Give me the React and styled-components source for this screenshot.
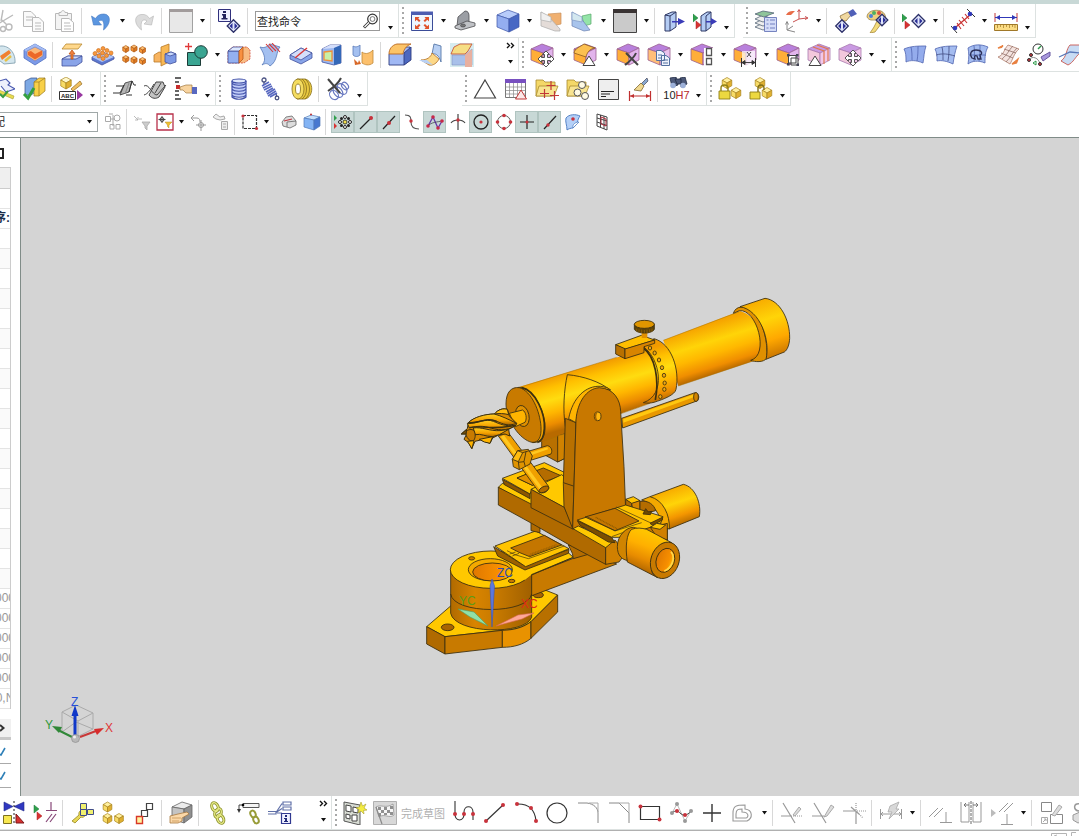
import React from 'react';
import styled, { createGlobalStyle, css } from 'styled-components';

const GlobalStyle = createGlobalStyle`
	* {
		box-sizing: border-box;
	}
	body {
		margin: 0;
		background: #fff;
		font-family: "Liberation Sans", "Noto Sans CJK SC", sans-serif;
		font-size: 11px;
		color: #222;
		overflow: hidden;
	}
	button, input, select {
		font: inherit;
		color: inherit;
	}
`;

/* ---------- shared icon pieces ---------- */

function Cube({ x, y, s, t = '#c3d4f8', l = '#8fa8e8', r = '#5f7fd0', k = '#41519c' }) {
	const w = s * 0.87;
	const h = s / 2;
	return (
		<g stroke={k} strokeWidth=".7" strokeLinejoin="round">
			<path fill={t} d={`M${x} ${y - s}L${x + w} ${y - h}L${x} ${y}L${x - w} ${y - h}Z`} />
			<path fill={l} d={`M${x - w} ${y - h}L${x} ${y}V${y + s}L${x - w} ${y + h}Z`} />
			<path fill={r} d={`M${x + w} ${y - h}L${x} ${y}V${y + s}L${x + w} ${y + h}Z`} />
		</g>
	);
}

// wide box seen from a shallow angle, the base of the face-editing icons
function FaceBox({ x = 12, t = '#b880dc', l = '#ffae38', r = '#e2b4ec', k = '#9a5f90', w = 11 }) {
	return (
		<g stroke={k} strokeWidth=".8" strokeLinejoin="round">
			<path fill={t} d={`M${x - w} 6L${x} 1L${x + w} 5L${x + 1} 10Z`} />
			<path fill={l} d={`M${x - w} 6L${x + 1} 10V22L${x - w} 17Z`} />
			<path fill={r} d={`M${x + w} 5L${x + 1} 10V22L${x + w} 17Z`} />
		</g>
	);
}

const gold = { t: '#fff0a0', l: '#f8dc68', r: '#e0b030', k: '#a88420' };
const orange = { t: '#ffc070', l: '#f89838', r: '#e07820', k: '#b05c18' };
const rose = { t: '#c99ae2', l: '#f2c8dc', r: '#f2c8ea', k: '#a878b0' };

function MoveCross({ x = 16, y = 16 }) {
	return (
		<path transform={`translate(${x} ${y})`} fill="#fff" stroke="#444" strokeWidth=".9"
			d="M0-8L3.500-4.500H1.500V-1.500H4.500V-3.500L8 0L4.500 3.500V1.500H1.500V4.500H3.500L0 8L-3.500 4.500H-1.500V1.500H-4.500V3.500L-8 0L-4.500-3.500V-1.500H-1.500V-4.500H-3.500Z" />
	);
}

function Diamond({ x, y, r = 6 }) {
	return (
		<g transform={`translate(${x} ${y})`}>
			<path d={`M0 ${-r}L${r} 0L0 ${r}L${-r} 0Z`} fill="#dfe4fa" stroke="#2b2f68" strokeWidth="1.300" />
			<path d="M-1-3V3L-4 0ZM1-3V3L4 0Z" fill="#2b2f98" />
		</g>
	);
}

function Flags({ x, y }) {
	return (
		<g transform={`translate(${x} ${y})`}>
			<path d="M0 0L5 4L0 8Z" fill="#2fa04c" stroke="#1c7a38" strokeWidth=".5" />
			<path d="M3 7L8 11L3 15Z" fill="#d83232" stroke="#a82020" strokeWidth=".5" />
		</g>
	);
}

function Dots({ at, c = '#c8323c', r = 2 }) {
	return at.map(([x, y]) => <circle key={`${x}_${y}`} cx={x} cy={y} r={r} fill={c} />);
}

const ICONS = {
	cut: <g fill="none" stroke="#bbb" strokeWidth="1.400"><path d="M13 1L11 12M23 6L8 15" /><circle cx="19" cy="18" r="3" /><path d="M12 11L17 16" /><circle cx="13" cy="20" r="2.500" /></g>,
	copy: <g fill="#fafafa" stroke="#b9b9b9"><path d="M2.500 2.500H10L14.500 7V17.500H2.500Z" /><path d="M5 8H12M5 11H12" /><path d="M11.500 8.500H18L22.500 13V22.500H11.500Z" /><path d="M14 14H20M14 17H20M14 20H20" /></g>,
	paste: <g fill="#f4f4f4" stroke="#b9b9b9"><path d="M3.500 4.500H19.500V20.500H3.500Z" /><path d="M7 6.500V3.500H9C9 1 13 1 13 3.500H15.500V6.500Z" /><path fill="#fff" d="M9.500 9.500H17L21.500 13.500V22.500H9.500Z" /><path d="M12 14H18M12 17H19M12 20H19" /></g>,
	undo: <path d="M2.500 7L4.500 16L12.500 16L9.500 12.500C13 9.500 16 12 14.500 21C22 15.500 22.500 5.500 15 5C10.500 4.800 8 7 6.500 9.500Z" fill="#5b96e0" stroke="#4678c0" strokeWidth=".6" />,
	redo: <path d="M21.500 7L19.500 16L12 15L15 12C11 9 8 12 9.500 21C2 15.500 1.500 6.500 9 5.500C13.500 4.900 16 7 17.500 9.500Z" fill="#dcdcdc" stroke="#bcbcbc" strokeWidth=".7" />,
	swatch: <g><path d="M.500.500H23.500V23.500H.500Z" fill="#e8e8e8" stroke="#a2a2a2" /><path d="M0 0H24V3H0Z" fill="#a29c9c" /></g>,
	swatchDark: <g><path d="M.500.500H23.500V23.500H.500Z" fill="#cacaca" stroke="#444" /><path d="M0 0H24V4H0Z" fill="#3a3434" /></g>,
	objectInfo: <g><path d="M.500.500H12.500V12.500H.500Z" fill="#eef0ff" stroke="#30307c" /><path d="M5 2H8V4H5ZM4 5H8V9H9.500V10.500H3.500V9H5V6.500H4Z" fill="#20205c" /><Diamond x={15.500} y={17} r={6.300} /></g>,
	fit: <g><path d="M1.500 3.500H22.500V21.500H1.500Z" fill="#eef6ff" stroke="#3b4c98" /><path d="M1 2.500H23V6H1Z" fill="#4c5cb0" /><path d="M5 8H9.500L8.300 9.500L10.500 11.700L9 13L6.700 10.800L5 12.500ZM19 8H14.500L15.700 9.500L13.500 11.700L15 13L17.300 10.800L19 12.500ZM5 20H9.500L8.300 18.500L10.500 16.300L9 15L6.700 17.200L5 15.500ZM19 20H14.500L15.700 18.500L13.500 16.300L15 15L17.300 17.200L19 15.500Z" fill="#e0522c" /></g>,
	bracket: <g stroke="#4e4e52" strokeWidth=".8"><path fill="#9b9ea4" d="M5 8L12 2C15 2 16 4 16 7V15L4 17Z" /><path fill="#c0c2c6" d="M2 17L14 12L22 14V17L8 21L2 19Z" /><ellipse cx="10" cy="16.500" rx="2.500" ry="1.500" fill="#777" /></g>,
	shaded: <g stroke="#3c54a8" strokeWidth=".7"><path d="M1 6L12 1L23 5L13 10Z" fill="#b8ccfa" /><path d="M1 6L13 10V23L1 18Z" fill="#94aef0" /><path d="M23 5L13 10V23L23 18Z" fill="#4868c4" /></g>,
	clipOrange: <g strokeWidth=".7"><path d="M9 5L22 4V15L13 17Z" fill="#f0b070" stroke="#c8905c" /><path d="M2 3L10 8L21 20V22L16 22L2 17Z" fill="#e4dcd8" stroke="#aaa" /><path d="M2 3L12 8V13L2 11Z" fill="#f0f0f0" stroke="#b0b0b0" /></g>,
	clipGreen: <g strokeWidth=".7"><path d="M12 7L21 5V15L14 17Z" fill="#94e4a8" stroke="#58a868" /><path d="M2 3L10 8L20 21L14 22L2 17Z" fill="#a8c4ec" stroke="#6880b0" /><path d="M2 3L12 8V13L2 11Z" fill="#d4e8f0" stroke="#8098c4" /></g>,
	exportSolid: <g><path d="M3 6L10 3H14V18L8 22H3Z" fill="#b4ccf4" stroke="#2f3864" /><path d="M8 7L14 3M8 7V22M3 6L8 7" fill="none" stroke="#2f3864" /><path d="M10 12H16V9L23 12.500L16 16V13.500H10Z" fill="#3a3cb8" /></g>,
	exportFlags: <g><path d="M8 7L14 3H18V18L13 22H8Z" fill="#b4ccf4" stroke="#2f3864" /><path d="M13 7L18 3M13 7V22" fill="none" stroke="#2f3864" /><path d="M13 12H18V9L24 12.500L18 16V13.500H13Z" fill="#3a3cb8" /><Flags x={0} y={5} /></g>,
	layers: <g stroke="#567" strokeWidth=".8"><path d="M1 18L9 14L18 18L9 21Z" fill="#eee" /><path d="M1 14L9 10L18 14L9 17Z" fill="#eee" /><path d="M1 10L9 6L18 10L9 13Z" fill="#eee" /><path d="M1 5L9 2L20 4L10 8Z" fill="#8fc49a" /><path d="M10.500 8.500H22.500V22.500H10.500Z" fill="#d4dcf8" stroke="#5868b0" /><path d="M12.500 11H14.500M16 11H21M12.500 15H14.500M16 15H21M12.500 19H14.500M16 19H21" stroke="#5868b0" /></g>,
	csys: <g fill="none"><path d="M14 1V10L22 9M14 10L8 13" stroke="#c85050" /><path d="M12.500 3L14 .500L15.500 3M20 7.500L23 9L20 10.500" stroke="#c85050" /><path d="M2 14V21L10 23M2 21L8 17" stroke="#888" /><path d="M1 6C3 2 6 2 10 2L6 6Z" fill="#e86c48" /><path d="M.500 15.500L2 12.500L3.500 15.500" stroke="#888" /></g>,
	handDiamond: <g><path d="M6 7L14 3L17 6L12 12L8 12Z" fill="#f0d8a0" stroke="#907440" strokeWidth=".8" /><path d="M14 3L19 0L23 5L17 8Z" fill="#5060b8" /><Diamond x={8} y={17} r={6.300} /></g>,
	palette: <g><path d="M2 8C2 2 10 0 16 2C22 5 22 12 17 14C13 15 14 11 11 11C8 11 4 12 2 8Z" fill="#f0d080" stroke="#98844c" strokeWidth=".8" /><Dots at={[[6, 7]]} c="#4c80d8" /><Dots at={[[9, 4]]} c="#50b060" /><Dots at={[[14, 4]]} c="#d85040" /><path d="M12 12L16 15L10 23L5 24L9 18Z" fill="#f4dc7c" stroke="#a88c3c" strokeWidth=".8" /><Diamond x={17} y={11} r={5.800} /></g>,
	flagsDiamond: <g><Flags x={0} y={5} /><Diamond x={16.500} y={12} r={6.500} /></g>,
	pointMeasure: <g><path d="M5 18L19 6" stroke="#c83030" strokeWidth="1.200" /><path d="M8 11L13 17M11 8L16 14M6 14L10 20M14 5L18 10" stroke="#c83030" strokeWidth="1.100" /><path d="M0 17L6 24M16 0L24 8" stroke="#333" /><Dots at={[[4, 19], [19, 5]]} c="#3038b8" r={2.300} /></g>,
	measure: <g><path d="M1 4V13M23 4V13" stroke="#c03838" /><path d="M1 8.500H23" stroke="#3038b8" /><path d="M1.500 8.500L6 6V11ZM22.500 8.500L18 6V11Z" fill="#3038b8" /><path d="M.500 15.500H23.500V21.500H.500Z" fill="#fbdc84" stroke="#a07828" /><path d="M3.500 16V19M6.500 16V18M9.500 16V19M12.500 16V18M15.500 16V19M18.500 16V18M21 16V19" stroke="#a07828" strokeWidth=".7" /></g>,

	dial: <g><path d="M5 4C14 0 24 8 23 20L12 21L3 14Z" fill="#d4e6ee" stroke="#7898a8" strokeWidth=".8" /><path d="M8 13L17 7L19 10L10 17Z" fill="#f08030" /><path d="M13 18L19 13" stroke="#e8c040" strokeWidth="2.500" /></g>,
	pocket: <g><path d="M1 7L12 1L23 7V15L12 22L1 15Z" fill="#7c9ae8" stroke="#5070c0" strokeWidth=".8" /><path d="M1 7L12 1L23 7L12 14Z" fill="#a4bcf4" /><path d="M4 8L12 4L20 8V13L12 18L4 13Z" fill="#fbb878" stroke="#6c80c8" strokeWidth=".7" /><path d="M5 9L8 8L12 11L19 7.500V12L12 16.500L5 12Z" fill="#ec6828" /></g>,
	extrude: <g strokeWidth=".8"><path d="M6 1H22L18 6H2Z" fill="#ffd88c" stroke="#b88830" /><path d="M2 16L8 13H22V19L16 23H2Z" fill="#8aa4e8" stroke="#41519c" /><path d="M2 16H16L22 13L8 13Z" fill="#d0dcfa" stroke="#41519c" /><path d="M11 16V11H9L12 7L15 11H13V16Z" fill="#f08040" stroke="#c05818" /></g>,
	pinBlock: <g><path d="M1 14L12 9L23 14V16L11 22L1 17Z" fill="#5c78d0" stroke="#41519c" strokeWidth=".8" /><path d="M1 14L12 9L23 14L11 19Z" fill="#b0c4f4" /><g stroke="#c86818" strokeWidth=".6" fill="#f8983c"><circle cx="12" cy="5.500" r="2" /><circle cx="7.500" cy="7.500" r="2" /><circle cx="16" cy="7.500" r="2" /><circle cx="4" cy="10.500" r="2" /><circle cx="11.500" cy="10" r="2" /><circle cx="20" cy="10" r="2" /><circle cx="8" cy="13" r="2" /><circle cx="15.500" cy="12.500" r="2" /><circle cx="12" cy="15.500" r="2" /></g></g>,
	pattern: <g><Cube x={3.800} y={6} s={3.500} {...orange} /><Cube x={12} y={5.500} s={3.500} {...orange} /><Cube x={20.500} y={7} s={3.500} {...orange} /><Cube x={3.800} y={16} s={3.500} {...orange} /><Cube x={12} y={17} s={3.500} {...orange} /><Cube x={20.500} y={18} s={3.500} {...orange} /></g>,
	planeCut: <g strokeWidth=".8"><path d="M1 12L6 9L11 10V19L1 19Z" fill="#f8b460" stroke="#b87828" /><path d="M8 4L16 1V19L8 23Z" fill="#f8b854" stroke="#b87828" /><path d="M12 11L18 9L23 11V19L17 21L12 19Z" fill="#7c98e4" stroke="#41519c" /><path d="M12 11L18 9L23 11L17 13Z" fill="#c8d8fa" stroke="#41519c" /></g>,
	unite: <g><path d="M4.500 0V7M1 3.500H8" stroke="#e03838" strokeWidth="1.300" /><path d="M3.500 9.500H16.500V22.500H3.500Z" fill="#3aa592" stroke="#1c3c38" /><circle cx="17" cy="9" r="6.300" fill="#3aa592" stroke="#1c3c38" /></g>,
	trimBody: <g strokeWidth=".8"><path d="M1 8L6 4H20L23 7V16L17 20H1Z" fill="#f8bc84" stroke="#d04830" strokeDasharray="2 1" /><path d="M1 8H12V20H1Z" fill="#94b0f0" stroke="#41519c" /><path d="M1 8L6 4H16L12 8Z" fill="#dce6fc" stroke="#41519c" /><path d="M12 8L16 4V16L12 20Z" fill="#f89040" stroke="#b85818" /></g>,
	draftCurve: <g><path d="M2 4C8 6 10 2 12 1L22 4C18 8 20 18 12 23C10 20 7 20 4 22C10 16 4 8 2 4Z" fill="#a4c0f0" stroke="#5878b8" strokeWidth=".8" /><path d="M8 1L15 9M11 1L18 8M14 0L22 9" stroke="#d83838" strokeWidth="1.100" /></g>,
	splitSolid: <g><path d="M1 12L12 5L23 10V15L12 21L1 16Z" fill="#88a4e8" stroke="#41519c" strokeWidth=".8" /><path d="M1 12L12 5L23 10L12 17Z" fill="#d4defa" stroke="#41519c" strokeWidth=".8" /><path d="M6 15L18 5" stroke="#d83838" strokeWidth="1.400" /></g>,
	shell: <g strokeWidth=".8"><path d="M2 6L10 2H21V20L14 22L2 19Z" fill="#9cb8f0" stroke="#41519c" /><path d="M2 6L10 2H21L14 5Z" fill="#d4defa" /><path d="M4 9L12 8V18L4 17Z" fill="#c8f0a8" stroke="#f09038" strokeWidth="1.300" /><path d="M14 5L21 2V20L14 22Z" fill="#3468b8" /></g>,
	bendSheet: <g strokeWidth=".8"><path d="M2 3C5 5 8 3 9 2V12C7 14 4 14 2 12Z" fill="#a4c0f0" stroke="#5878b8" /><path d="M11 9C15 12 19 10 22 7V20C18 23 14 22 11 20Z" fill="#fcc06c" stroke="#c08838" /><path d="M3 16L7 20L8 17L10 21L4 22Z" fill="#d86828" /></g>,
	edgeBlend: <g strokeWidth=".9"><path d="M1 11L8 4H22V17L16 22H1Z" fill="#a0b8f4" stroke="#303c80" /><path d="M16 10L23 4V17L16 22Z" fill="#4c68c0" stroke="#303c80" /><path d="M1 11C1 6 4 2 9 1H23C18 3 16 6 15 11Z" fill="#fcc468" stroke="#b86820" /></g>,
	sheetBlend: <g strokeWidth=".9"><path d="M15 1L22 3V19C20 12 16 10 13 11Z" fill="#b8d0f4" stroke="#5878a8" /><path d="M2 17C8 17 12 14 13 10L20 16C18 20 14 23 10 22Z" fill="#fcd888" stroke="#b87830" /><path d="M0 17H8L14 22L6 20Z" fill="#b8d0f4" /></g>,
	chamfer: <g><path d="M0 0H24V24H0Z" fill="#d6ecf0" /><path d="M2 12H15L22 6V22H2Z" fill="#a8c0ea" stroke="#8090c0" strokeWidth=".6" /><path d="M15 12L22 6V24H15Z" fill="#e8b0a0" /><path d="M4 4L10 1H22L18 8L15 11H1Z" fill="#f6de84" stroke="#c8583c" strokeWidth=".9" /></g>,

	moveFace: <g><FaceBox /><MoveCross /></g>,
	resizeBlend: <g><FaceBox /><path d="M1 10C2 5 7 4 11 1L22 5C16 6 14 10 13 14Z" fill="#fcc050" stroke="#8a5a20" strokeWidth=".8" /><path d="M10 22.500L16 13L22 22.500Z" fill="#fff" stroke="#444" /></g>,
	deleteFace: <g><FaceBox /><path d="M10 10L22 22M20 10C18 15 14 18 9 22" stroke="#444" strokeWidth="2" fill="none" /></g>,
	copyFace: <g><FaceBox l="#ffbe78" r="#eac0ec" /><path d="M9.500 7.500H14L17.500 10V17.500H9.500ZM14.500 12.500H19L22.500 15V22.500H14.500Z" fill="#eef2fc" stroke="#5470a0" /><path d="M11 12H15M11 15H14M16 17H21M16 20H21" stroke="#5470a0" /></g>,
	patternFace: <g><FaceBox /><path d="M14 5H24V23H14Z" fill="#fff" /><path d="M16.500 5.500H21.500V12.500H16.500ZM16.500 15.500H21.500V21.500H16.500Z" fill="#fff" stroke="#555" strokeWidth="1.300" /></g>,
	dimension: <g><FaceBox /><path d="M9 8H22V24H9Z" fill="#fff" opacity=".7" /><path d="M8.500 15V24M22.500 15V24" stroke="#333" /><path d="M9 19.500H22M9 19.500L12 17.500V21.500ZM22 19.500L19 17.500V21.500ZM14 9L18 14M18 9L14 14" stroke="#333" fill="#333" strokeWidth=".9" /></g>,
	groupFace: <g><FaceBox /><path d="M12.500 12.500H20V20H12.500ZM15 15H22V22H15Z" fill="#fff" stroke="#444" /><path d="M11 11H13.500V13.500H11ZM20 11H22.500V13.500H20ZM11 20H13.500V22.500H11ZM20.500 20.500H23V23H20.500Z" fill="#445" /></g>,
	linearDim: <g><FaceBox {...rose} /><path d="M6 4L17 8V21M10 2L21 6V18" stroke="#e07850" strokeWidth="1.200" fill="none" /><path d="M2 22.500L8 13L14 22.500Z" fill="#fff" stroke="#444" /></g>,
	moveRegion: <g><FaceBox {...rose} /><MoveCross x={15} y={15} /></g>,
	surfA: <g strokeWidth=".8" stroke="#5064b0"><path d="M1 6C8 3 15 3 23 3C21 9 21 14 20 20C13 17 7 17 3 19C3 13 3 10 1 6Z" fill="#94acec" /><path d="M8 4C9 8 9 12 9 17M15 3C15 8 15 12 14 18" fill="none" /></g>,
	surfB: <g strokeWidth=".8" stroke="#5064b0"><path d="M1 6C8 3 15 3 23 3C21 9 20 14 19 21C13 18 7 17 3 18C3 13 3 10 1 6Z" fill="#a4bcf0" /><path d="M8 4C9 8 9 12 9 17M15 3C15 8 15 12 14 18M2 12C9 10 14 11 21 13" fill="none" stroke="#404a80" /></g>,
	surfC: <g strokeWidth=".8" stroke="#5064b0"><path d="M3 5C9 1 16 1 23 4C20 9 20 14 20 20C13 17 7 18 3 21C4 15 4 10 3 5Z" fill="#a4bcf0" /><path d="M9 3C10 8 9 14 9 18M15 2C15 8 15 14 14 18M4 12H21" fill="none" /><path d="M7 15C4 11 6 7 11 7C17 7 18 11 15 12L16 16H13L12 13C10 12 9 13 10 16Z" fill="none" stroke="#2c3058" strokeWidth="1.300" /></g>,
	surfD: <g strokeWidth=".8"><path d="M2 14C8 12 8 6 12 2L23 6C18 10 17 16 14 21Z" fill="#f4e4e0" stroke="#b08070" /><path d="M5 10L17 15M8 6L20 10M6 16C12 11 12 8 17 3M10 19C15 14 16 10 21 5" stroke="#907068" fill="none" /><path d="M2 5L7 2.500L5.500 4.500ZM16 21L22 16L20.500 20Z" fill="#e88040" stroke="#e88040" strokeWidth="1.300" /></g>,
	tangent: <g fill="none" stroke="#333"><circle cx="11" cy="6" r="5" /><path d="M11 6L14 3" stroke="#2a9a48" strokeWidth="1.500" /><path d="M14 14L23 9V13L16 18Z" fill="#a898dc" stroke="#6858a0" /><path d="M2 17C5 12 12 15 13 21" stroke="#888" /><path d="M6 20L9 18V22Z" stroke="#2a9a48" /><Dots at={[[2, 17], [13, 21], [4, 12]]} r={1.500} /></g>,
	surfE: <g strokeWidth=".9"><path d="M3 18C9 14 8 6 12 2H22V10C17 14 16 19 10 22Z" fill="#c8dcf4" stroke="#c85850" /><path d="M1 14L12 9L22 10" stroke="#5878b8" fill="none" strokeWidth="1.300" /></g>,

	sketchFlag: <g><path d="M5 5L15 2L19 6L17 8L24 12L15 15L10 9" fill="#eef0fc" stroke="#4858b0" strokeWidth="1.100" /><path d="M8 13L23 19L22 22L8 16Z" fill="#e8dc50" stroke="#a89c30" strokeWidth=".6" /><path d="M9 17L12 20L17 14" stroke="#3a9c40" strokeWidth="2" fill="none" /></g>,
	assemblyCheck: <g><path d="M3 4L9 1H15V14L9 18H3Z" fill="#7ca8e4" stroke="#385088" strokeWidth=".7" /><path d="M12 5L17 1H23V14L17 19H12Z" fill="#f8d048" stroke="#987820" strokeWidth=".7" /><path d="M12 5H17L23 1M17 5V19" stroke="#987820" strokeWidth=".7" fill="none" /><path d="M2 17L6 21L12 11" stroke="#34a040" strokeWidth="3" fill="none" /></g>,
	noteEdit: <g><Cube x={7} y={6} s={6} {...gold} t="#fff8cc" /><path d="M12 12L21 4L23 7L14 14Z" fill="#f0c060" stroke="#906820" strokeWidth=".7" /><path d="M.500 14.500H16.500V22.500H.500Z" fill="#fff" stroke="#333" /><text x="2" y="21" fontSize="6" fontWeight="700" fill="#222">ABC</text><path d="M18 13L24 18L18 23Z" fill="#9838a0" /></g>,
	ridge: <g><path d="M8 18L13 6L20 4L17 15Z" fill="#b4b4b4" stroke="#333" strokeWidth=".8" /><path d="M17 15L20 4L22 8H24" fill="none" stroke="#333" /><path d="M13 17L17 6" stroke="#888" /><path d="M1 16H8L12 8M4 9H12M14 18H20" fill="none" stroke="#333" /></g>,
	ridgeWide: <g><path d="M6 18L13 5L20 5L22 10L16 20C13 22 9 22 6 18Z" fill="#c4c4c4" stroke="#333" strokeWidth=".9" /><path d="M1 9C6 6 9 18 14 18L23 8M1 18C5 17 8 12 11 7M12 16L18 6" fill="none" stroke="#444" /></g>,
	pickList: <g><path d="M1 1H7M1 5H5M1 14H5M1 18H5M1 22H7" stroke="#333" strokeWidth="1.600" /><path d="M2 8H6V12H2Z" fill="#c82c2c" /><path d="M6 10L12 8H18V16H12L9 13H6Z" fill="#f8d4a0" stroke="#a07840" strokeWidth=".7" /><path d="M18 10H23V17H18Z" fill="#5868c0" /></g>,
	coil: <g fill="none" stroke="#4050a8" strokeWidth="1.200"><path d="M5 4H19V20H5Z" fill="#c0ccf8" stroke="none" /><ellipse cx="12" cy="4" rx="7" ry="2" fill="#e0e8fc" /><path d="M5 6C7 9 17 9 19 6M5 9C7 12 17 12 19 9M5 12C7 15 17 15 19 12M5 15C7 18 17 18 19 15M5 18C7 21 17 21 19 18M5 4V20C8 23 16 23 19 20V4" /></g>,
	spring: <g fill="none" stroke="#4c5484" strokeWidth="1.300"><circle cx="6" cy="3" r="2" /><path d="M6 5L6 8M18 17L19 20" /><path d="M4 9L11 5M5 11L13 7M6 13L14 9M8 15L15 11M9 17L17 12M10 19L18 14M12 20L19 16" stroke="#5868c0" strokeWidth="1.600" /><circle cx="19" cy="21" r="1.800" /></g>,
	rings: <g><path d="M8 2H16C25 4 25 20 16 22H8Z" fill="#e8c840" stroke="#88701c" strokeWidth=".8" /><path d="M13 2C19 6 19 18 13 22M16 2C22 6 22 18 16 22" fill="none" stroke="#88701c" strokeWidth=".8" /><ellipse cx="9" cy="12" rx="6" ry="10" fill="#f4dc60" stroke="#88701c" strokeWidth=".8" /><ellipse cx="9" cy="12" rx="2.500" ry="5" fill="#fff" stroke="#88701c" strokeWidth=".8" /></g>,
	springDelete: <g fill="none"><g stroke="#6878c0" strokeWidth="1.200"><ellipse cx="8" cy="18" rx="4" ry="5" transform="rotate(-40 8 18)" /><ellipse cx="12" cy="15" rx="4" ry="6" transform="rotate(-40 12 15)" /><ellipse cx="16" cy="12" rx="4" ry="6" transform="rotate(-40 16 12)" /><ellipse cx="19" cy="9" rx="3" ry="4" transform="rotate(-40 19 9)" /></g><path d="M2 2L14 16M15 1C12 7 8 10 2 14" stroke="#444" strokeWidth="2" /></g>,
	triangle: <path d="M12 3L22.500 21H1.500Z" fill="#fff" stroke="#444" strokeWidth="1.200" />,
	tableTri: <g><path d="M1.500 2.500H21.500V20.500H1.500Z" fill="#fff" stroke="#777" /><path d="M1 2H22V6H1Z" fill="#7850c0" /><path d="M1.500 10H21.500M1.500 13.500H21.500M1.500 17H21.500M5.500 6V20M9.500 6V20M13.500 6V20M17.500 6V20" stroke="#888" strokeWidth=".7" /><path d="M17 13L22.500 22H11.500Z" fill="#fbe8e8" stroke="#c03838" /></g>,
	folderPoints: <g><path d="M1 3H8L10 5H20V9L17 19H1Z" fill="#f4d868" stroke="#a88c30" strokeWidth=".8" /><path d="M4 9H23L19 19H1Z" fill="#f8e490" stroke="#a88c30" strokeWidth=".8" /><path d="M16 4V13M11.500 8.500H20.500M9.500 12V21M5 16.500H14M19.500 14V23M15 18.500H24" stroke="#c03838" strokeWidth="1.200" /></g>,
	folderCircles: <g><path d="M1 3H8L10 5H20V9L17 19H1Z" fill="#f4d868" stroke="#a88c30" strokeWidth=".8" /><path d="M4 9H23L19 19H1Z" fill="#f8e490" stroke="#a88c30" strokeWidth=".8" /><g fill="#fffbe4" stroke="#555"><circle cx="16" cy="8" r="3.500" /><circle cx="11.500" cy="15.500" r="3.500" /><circle cx="19" cy="19" r="3.500" /></g></g>,
	textNote: <g><path d="M1.500 2.500H21.500V22.500H1.500Z" fill="#eee" stroke="#444" /><path d="M4 14.500H17M4 17H13M4 19.500H9" stroke="#222" strokeWidth="1.200" /></g>,
	brushDim: <g><path d="M17 3L19 1L20 4L15 9L13 7Z" fill="#88a8d0" stroke="#445" strokeWidth=".7" /><path d="M13 6L16 9L13 14L6 13Z" fill="#f0d890" stroke="#806830" strokeWidth=".8" /><path d="M1.500 14V24M22.500 14V24M2 19H22" stroke="#c03030" strokeWidth="1.200" /><path d="M2 19L6 17V21ZM22 19L18 17V21Z" fill="#c03030" /></g>,
	holeSearch: <g><g fill="#4c5878" stroke="#222c44" strokeWidth=".8"><path d="M5 1L11 0L13 8L7 10Z" /><path d="M15 1L20 0L22 7L16 10Z" /><path d="M10 2H16V7H12Z" /></g><circle cx="8" cy="8.500" r="2.800" fill="#9cb0d8" /><circle cx="18" cy="8.500" r="2.800" fill="#9cb0d8" /></g>,
	lockBlocks: <g><Cube x={9} y={6} s={5.500} {...gold} /><Cube x={18} y={16} s={5.500} {...gold} /><path d="M1 14H12V22H1Z" fill="#ecd840" stroke="#908018" strokeWidth=".9" /><path d="M3 14V11C3 7 10 7 10 11V14" fill="none" stroke="#908018" strokeWidth="1.400" /></g>,
	unlockBlocks: <g><Cube x={11} y={6} s={5.500} {...gold} /><Cube x={18} y={16} s={5.500} {...gold} /><path d="M1 15H11V22H1Z" fill="#ecd840" stroke="#908018" strokeWidth=".9" /><path d="M9 15V11C9 7 15 7 15 11V13" fill="none" stroke="#807018" strokeWidth="1.400" /></g>,

	mirrorAsm: <g><path d="M2 1L11 5.500L2 10ZM22 1L12 5.500L22 10Z" fill="#3038c0" stroke="#202888" strokeWidth=".6" /><path d="M12 0V24" stroke="#222" strokeDasharray="2 2" /><path d="M1.500 14.500H9.500V22.500H1.500Z" fill="#f8e850" stroke="#7c7020" /><path d="M14 13L22 22H14Z" fill="#d83030" stroke="#7c1818" /></g>,
	constraint: <g><Flags x={1} y={4} /><path d="M18 1V9M13 9.500H24M13 21L19 13M17 21L23 13" stroke="#884878" strokeWidth="1.200" /></g>,
	wrenchBlocks: <g><path d="M2 20L9 14C8 10 12 8 14 10L16 13C15 16 12 17 11 16L5 22Z" fill="#e8d858" stroke="#988820" strokeWidth=".8" /><path d="M10.500 2.500H16.500V8.500H10.500ZM17.500 8.500H23.500V13.500H17.500ZM10.500 8.500H16.500V14.500H10.500Z" fill="#f0f070" stroke="#404c88" /></g>,
	blockSet: <g><Cube x={6.500} y={6} s={5} {...gold} /><Cube x={6.500} y={17.500} s={5} {...gold} /><Cube x={18} y={17.500} s={5} {...gold} /></g>,
	squares: <g fill="#fff"><path d="M14.500 2.500H20.500V8.500H14.500Z" stroke="#444" strokeWidth="1.200" /><path d="M9.500 9.500H15.500V15.500H9.500Z" stroke="#444" strokeWidth="1.200" /><path d="M4.500 15.500H10.500V22.500H4.500Z" fill="#fff4a0" stroke="#d83828" strokeWidth="1.400" /></g>,
	blockHand: <g><g stroke="#666" strokeWidth=".8"><path d="M3 6L13 1L23 4L15 8Z" fill="#ececec" /><path d="M3 6L15 8V22L3 18Z" fill="#c4c4c4" /><path d="M23 4L15 8V22L23 16Z" fill="#909090" /></g><path d="M1 15L9 13L18 11L20 13L13 17V20L9 22H1Z" fill="#fbd8a8" stroke="#a87840" strokeWidth=".8" /><path d="M3 17H12M3 20H10" stroke="#c89858" strokeWidth=".8" /></g>,
	chain: <g fill="none" stroke="#8f9430" strokeWidth="3"><ellipse cx="9" cy="6" rx="3" ry="4.500" transform="rotate(-25 9 6)" /><ellipse cx="12" cy="12" rx="3" ry="4.500" transform="rotate(25 12 12)" /><ellipse cx="14.500" cy="18" rx="3" ry="4.500" transform="rotate(-25 14.500 18)" /><g stroke="#e8ec88" strokeWidth="1.300"><ellipse cx="9" cy="6" rx="3" ry="4.500" transform="rotate(-25 9 6)" /><ellipse cx="12" cy="12" rx="3" ry="4.500" transform="rotate(25 12 12)" /><ellipse cx="14.500" cy="18" rx="3" ry="4.500" transform="rotate(-25 14.500 18)" /></g></g>,
	waveLink: <g><path d="M6 2.500H22V6.500H6Z" fill="#f4f4f4" stroke="#555" /><path d="M5 4H2V9" fill="none" stroke="#444" /><path d="M0 8H4L2 12Z" fill="#333" /><circle cx="6" cy="4" r="1.300" /><g fill="none" stroke="#989c38" strokeWidth="2"><ellipse cx="16" cy="13" rx="2.500" ry="3.500" transform="rotate(-25 16 13)" /><ellipse cx="19" cy="19" rx="2.500" ry="3.500" transform="rotate(-25 19 19)" /></g></g>,
	relations: <g fill="none" stroke="#6070a8" strokeWidth="1.200"><path d="M0 10.500H8V13H0M8 11.500L14 2.500M8 11.500L14 7.500M9 12H14M15 1V4H23V1ZM15 6V9H23V6Z" /><path d="M13.500 12.500H22.500V22.500H13.500Z" fill="#eef0ff" stroke="#303890" /><path d="M17 14H19V16H17ZM16 17H19V20H20V21H16V20H17V18H16Z" fill="#202878" stroke="none" /></g>,

	sketchGrid: <g><path d="M1 1L17 4V24L1 20Z" fill="#d8dcd4" stroke="#555" /><path d="M3 4L8 5V11L3 10ZM10 6L15 7V12L10 11ZM3 13L7 14V18L3 17ZM9 14H14V20H9Z" fill="#fff" stroke="#444" /><path d="M18 1L19.500 5L23 3L21 7L24 9L20.500 9.500L21 13L18 10L15 12L16 8.500L13 7L16.500 6Z" fill="#f4ec40" stroke="#a8a030" strokeWidth=".6" /></g>,
	finishFlag: <g><path d="M.500.500H23.500V23.500H.500Z" fill="#d8d8d8" stroke="#b0b0b0" /><path d="M3 6C8 3 13 8 20 3L21 14C16 18 12 12 6 16Z" fill="#f6f6f6" stroke="#888" strokeWidth=".7" /><path d="M5 6H8V9H5ZM11 6H14V9H11ZM17 5H20V8H17ZM8 9H11V12H8ZM14 9H17V12H14ZM6 12H8V15H6ZM11 12H14V14H11ZM17 11H20V14H17Z" fill="#909090" /><path d="M3 6L9 23" stroke="#888" strokeWidth="1.200" /></g>,
	profile: <g fill="none" stroke="#333" strokeWidth="1.100"><path d="M3 0V13C3 21 12 21 12 13V11C12 4 21 4 21 11V19" /><g stroke="none"><Dots at={[[3, 13], [12, 13], [21, 13]]} /></g></g>,
	line: <g><path d="M3 20L20 4" stroke="#333" strokeWidth="1.200" /><Dots at={[[3, 20], [20, 4]]} /></g>,
	arc: <g><path d="M4 3C16 3 21 9 22 20" fill="none" stroke="#333" strokeWidth="1.200" /><Dots at={[[3, 3], [17, 7], [22, 20]]} /></g>,
	circle: <circle cx="12" cy="12" r="10" fill="none" stroke="#333" strokeWidth="1.200" />,
	fillet: <g fill="none" stroke="#aaa"><path d="M2 2H11C18 3 22 7 22 12V22" stroke="#888" /><path d="M13 2H22V11" /></g>,
	chamferLine: <g fill="none" stroke="#aaa"><path d="M2 2H12L22 12V22" stroke="#888" /><path d="M12 2H22V12" /></g>,
	rect: <g><path d="M2.500 5.500H21.500V18.500H2.500Z" fill="#fff" stroke="#333" strokeWidth="1.200" /><Dots at={[[2.500, 5.500], [21.500, 18.500]]} /></g>,
	spline: <g><path d="M3 12L8 3L16 20L22 10" fill="none" stroke="#bbb" /><path d="M3 12C6 9 10 10 11 12C14 15 18 15 22 10" fill="none" stroke="#444" /><Dots at={[[3, 12], [8, 3], [16, 20], [22, 10]]} c="#999" /><Dots at={[[8, 10], [16, 14]]} /></g>,
	plus: <path d="M12 3V21M3 12H21" stroke="#333" strokeWidth="1.400" />,
	offset: <g fill="none" stroke="#999" strokeWidth="1.100"><path d="M2 12C2 5 5 4 14 4V8C22 9 22 17 16 20H2Z" /><path d="M5 13C5 8 8 8 11 8V11C18 11 18 16 15 17H5Z" /></g>,
	quickTrim: <g stroke="#999" strokeWidth="1.200" fill="none"><path d="M3 2L15 22M1 15H12" /><path d="M13 15H22" strokeDasharray="1 1" /><path d="M13 14L19 6L21 8L15 15Z" fill="#ddd" strokeWidth=".8" /></g>,
	quickExtend: <g stroke="#999" strokeWidth="1.200" fill="none"><path d="M3 2L15 22M1 15H13" /><path d="M13 16L20 4L23 6L16 15Z" fill="#ddd" strokeWidth=".8" /></g>,
	corner: <g stroke="#999" strokeWidth="1.200" fill="none"><path d="M1 10H14V23M9 6L17 13" /><path d="M15 10H24M14 2V9M17 13L21 17" strokeDasharray="1 1" /></g>,
	rapidDim: <g stroke="#999" fill="none"><path d="M1.500 8V18M22.500 8V18M2 13H22M4 11L2 13L4 15M20 11L22 13L20 15" /><path d="M11 5L20 1L17 8L20 8L10 18L13 11L9 11Z" fill="#d8d8d8" stroke="#aaa" strokeWidth=".8" /></g>,
	parallel: <g stroke="#999"><path d="M1 16L10 7M6 16L15 7M18 11V21M12 21.500H24" /></g>,
	symmetric: <g stroke="#999" fill="none"><path d="M2 1V21H10V1M14 1V21H22V1" /><path d="M12 0V24" strokeDasharray="3 1" stroke="#666" /><path d="M5 4H10M14 4H19M7 2L5 4L7 6M17 2L19 4L17 6" stroke="#777" /></g>,
	constrain: <g stroke="#999" fill="#bbb"><path d="M1 8L6 12L1 16Z" stroke="none" /><path d="M9 11L18 2M14 11L23 2M17 13V23M11 23.500H23" fill="none" /></g>,
	convert: <g stroke="#888" fill="#fff"><path d="M2.500 1.500H12.500V10.500H2.500ZM11.500 13.500H23.500V22.500H11.500Z" /><path d="M2.500 16.500H8.500V22.500H2.500ZM4 21L7 18M5 18H7V20" stroke="#aaa" /><path d="M13 14L20 4L23 6L16 15Z" fill="#ddd" stroke="#aaa" /></g>,
	stack: <g stroke="#999" fill="#ddd"><path d="M10 3C3 1 3 10 9 10L11 8" fill="none" strokeWidth="1.500" /><path d="M3 14L10 11L16 14V19L8 22L3 19Z" /></g>,
};

// the selection bar uses a smaller 18px grid
const SMALL = {
	asmTree: <g fill="none" stroke="#aaa"><path d="M1.500 3.500H6.500V8.500H1.500ZM6 11.500H10V16H6ZM12 11.500H16V16H12ZM7 6H11M9 2V13M5 1H9" /><circle cx="13" cy="5" r="3" /></g>,
	filterReset: <g fill="#ccc" stroke="#aaa" strokeWidth=".8"><path d="M1 3L5 7L2 7M5 7V4M6 6H9" fill="none" /><path d="M9 9H17L14 13V17L12 15V13Z" /></g>,
	filterBox: <g><path d="M1 1H17V17H1Z" fill="#fff" stroke="#b8304a" strokeWidth="1.300" /><path d="M6 3V10M2.500 6.500H9.500" stroke="#444" /><circle cx="6" cy="6.500" r="2" fill="none" stroke="#444" /><path d="M9 9H16L13 12V15L11.500 13.500V12Z" fill="#f0c030" stroke="#b89028" strokeWidth=".5" /></g>,
	undoPick: <g fill="none" stroke="#999"><path d="M2 5L5 2M2 5L5 8M2 5H8C11 5 11 8 11 9" /><circle cx="12" cy="12" r="2.500" /><path d="M12 7V18M7 12H17" /></g>,
	pickPage: <g fill="#eee" stroke="#aaa"><path d="M1 4L4 1L8 4L12 3L13 6L8 7L4 6Z" /><path d="M9.500 8.500H15.500V16.500H9.500Z" /><path d="M11 11H14M11 14H14" /></g>,
	marquee: <g><path d="M2 2.500H15.500V15.500H2Z" fill="none" stroke="#333" strokeWidth="1.200" strokeDasharray="3 1" /><Dots at={[[2, 3], [15.500, 15.500]]} r={1.600} /></g>,
	solidFace: <g><path d="M2 9L6 4L12 3L16 8V12L10 15L3 13Z" fill="#ddd" stroke="#666" strokeWidth=".8" /><path d="M4 8L12 6" stroke="#c03840" strokeWidth="1.200" /><path d="M7 14V9L16 8" fill="none" stroke="#666" strokeWidth=".8" /></g>,
	shadedSmall: <g stroke="#5078b8" strokeWidth=".7"><path d="M1 5L8 2L17 4L11 7Z" fill="#c4e0fc" /><path d="M1 5L11 7V17L1 14Z" fill="#84b4f4" /><path d="M17 4L11 7V17L17 13Z" fill="#4878d0" /><circle cx="8" cy="1.500" r="1" fill="#c03030" stroke="none" /></g>,
	snapOn: <g><path d="M0 2L3 5L0 8Z" fill="#2fa04c" /><path d="M0 10L3 13L0 16Z" fill="#d83232" /><g fill="#222"><circle cx="7.500" cy="5.500" r="1.500" /><circle cx="14.500" cy="5.500" r="1.500" /><circle cx="7.500" cy="12.500" r="1.500" /><circle cx="14.500" cy="12.500" r="1.500" /></g><circle cx="11" cy="9" r="2" fill="#f0e050" stroke="#222" strokeWidth=".8" /><g fill="#fff" stroke="#222"><circle cx="11" cy="4" r="1.500" /><circle cx="11" cy="14" r="1.500" /><circle cx="6" cy="9" r="1.500" /><circle cx="16" cy="9" r="1.500" /></g></g>,
	endPoint: <g><path d="M3 16L15 4" stroke="#222" strokeWidth="1.200" /><Dots at={[[14, 5]]} /></g>,
	midPoint: <g><path d="M3 16L15 3" stroke="#222" strokeWidth="1.200" /><Dots at={[[9, 10]]} /></g>,
	control: <g><path d="M2 2C8 2 8 5 8 9C8 14 11 16 16 16" fill="none" stroke="#555" strokeWidth="1.100" /><Dots at={[[8, 8]]} r={1.700} /></g>,
	pole: <g><path d="M2 13L7 4L12 15L16 8" fill="none" stroke="#6838a8" strokeWidth="1.300" /><path d="M2 13C5 9 12 9 16 8" fill="none" stroke="#334" strokeWidth=".7" /><Dots at={[[2, 13], [7, 4], [12, 15], [16, 8]]} c="#c82848" r={1.800} /></g>,
	intersect: <g><path d="M2 10C5 6 13 6 16 10M9 1V17" fill="none" stroke="#444" strokeWidth="1.200" /><Dots at={[[9, 7]]} r={1.700} /></g>,
	centerPt: <g><circle cx="9" cy="9" r="7" fill="none" stroke="#222" strokeWidth="1.300" /><Dots at={[[9, 9]]} r={1.600} /></g>,
	quadrant: <g><circle cx="9" cy="9" r="6.500" fill="none" stroke="#555" /><Dots at={[[9, 2.500], [9, 15.500], [2.500, 9], [15.500, 9]]} r={1.800} /></g>,
	existing: <g><path d="M9 2V16M2 9H16" stroke="#222" strokeWidth="1.200" /><Dots at={[[9, 9]]} r={1.500} /></g>,
	onCurve: <g><path d="M3 16L15 3" stroke="#222" strokeWidth="1.200" /><Dots at={[[7, 12]]} r={1.700} /></g>,
	onFace: <g><path d="M2 5C5 1 12 1 16 3C13 7 14 11 9 15C7 15 4 16 3 17C3 12 1 9 2 5Z" fill="#b4d0f8" stroke="#4878c0" strokeWidth=".9" /><path d="M9 15C8 11 12 9 15 9Z" fill="#fff" stroke="#4878c0" strokeWidth=".7" /><Dots at={[[9, 6]]} r={1.800} /></g>,
	gridSnap: <g><path d="M4 1L14 4V17L4 13Z" fill="#fff" stroke="#444" /><path d="M4 5L14 8M4 9L14 12.500M7.500 2V14.500M11 3V16" stroke="#444" /><path d="M8 4L13 6V13L8 11Z" fill="none" stroke="#b03040" /></g>,
};

/* ---------- toolbar definitions: | separator, v drop-down, ... spacer, > and >> overflow ---------- */

const ROWS = [
	{
		start: -14,
		groups: [
			{ items: ['cut', 'copy', 'paste', '|', 'undo', 'v', 'redo', '|', 'swatch', 'v', '|', 'objectInfo', '|', 'search', '>'] },
			{ grip: true, items: ['fit', 'v', 'bracket', 'v', 'shaded', 'v', 'clipOrange', 'clipGreen', 'v', 'swatchDark', 'v', '|', 'exportSolid', 'exportFlags', '>'] },
			{ grip: true, gap: 8, items: ['layers', 'csys', 'v', '|', 'handDiamond', 'palette', '|', 'flagsDiamond', 'v', '|', 'pointMeasure', 'v', 'measure', '>'] },
		],
	},
	{
		start: -12,
		groups: [
			{ spacer: 27, items: ['dial', 'pocket', '|', 'extrude', 'pinBlock', 'pattern', 'planeCut', 'unite', 'v', 'trimBody', 'draftCurve', 'splitSolid', 'shell', 'bendSheet', '|', 'edgeBlend', 'sheetBlend', 'chamfer', '...', '>>'] },
			{ grip: true, items: ['moveFace', 'v', 'resizeBlend', 'v', 'deleteFace', 'copyFace', 'v', 'patternFace', 'v', 'dimension', 'v', 'groupFace', 'linearDim', 'moveRegion', 'v', '>'] },
			{ grip: true, items: ['surfA', 'surfB', 'surfC', 'surfD', 'tangent', 'surfE'] },
		],
	},
	{
		start: -13,
		groups: [
			{ items: ['sketchFlag', 'assemblyCheck', '|', 'noteEdit', '>'] },
			{ grip: true, items: ['ridge', 'ridgeWide', 'pickList', '>'] },
			{ grip: true, items: ['coil', 'spring', 'rings', '|', 'springDelete', '>'] },
			{ grip: true, gap: 94, items: ['triangle', 'tableTri', 'folderPoints', 'folderCircles', 'textNote', 'brushDim', '|', 'holeSearch', '>'] },
			{ grip: true, items: ['lockBlocks', 'unlockBlocks', '>'] },
		],
	},
];

const SELECTION = ['asmTree', '|', 'filterReset', 'filterBox', 'v', 'undoPick', 'pickPage', '|', 'marquee', 'v', '|', 'solidFace', 'shadedSmall', '|'];
const SNAPS = ['snapOn', 'endPoint', 'midPoint', 'control', 'pole', 'intersect', 'centerPt', 'quadrant', 'existing', 'onCurve', 'onFace', '|', 'gridSnap'];
const PRESSED = ['snapOn', 'endPoint', 'midPoint', 'pole', 'centerPt', 'existing', 'onCurve'];

const BOTTOM = {
	start: -2,
	groups: [
		{ spacer: 22, items: ['mirrorAsm', 'constraint', '|', 'wrenchBlocks', 'blockSet', 'squares', '|', 'blockHand', '|', 'chain', 'waveLink', 'relations', '...', '>>'] },
		{ grip: true, items: ['sketchGrid', 'finish', 'profile', 'line', 'arc', 'circle', 'fillet', 'chamferLine', 'rect', 'spline', 'plus', 'offset', 'v', '|', 'quickTrim', 'quickExtend', 'corner', '|', 'rapidDim', 'v', '|', 'parallel', 'symmetric', 'constrain', 'v', '|', 'convert', 'stack'] },
	],
};

function toLabel(name) {
	return name.replace(/([A-Z])/g, ' $1').toLowerCase();
}

function Caret() {
	return <svg width="7" height="4" viewBox="0 0 7 4" aria-hidden="true"><path d="M1 0H6L3.500 3.500Z" fill="#111" /></svg>;
}

function ToolItem({ name, small, spacer }) {
	switch (name) {
		case '|':
			return <Separator />;
		case '...':
			return <Spacer $width={spacer} />;
		case 'v':
			return <DropButton $small={small} aria-label="more options"><Caret /></DropButton>;
		case '>':
			return <OverflowButton aria-label="toolbar options"><Caret /></OverflowButton>;
		case '>>':
			return (
				<OverflowButton $double aria-label="more buttons">
					<svg width="9" height="7" viewBox="0 0 9 7" aria-hidden="true"><path d="M1 1L3.500 3.500L1 6M5 1L7.500 3.500L5 6" fill="none" stroke="#111" strokeWidth="1.400" /></svg>
					<Caret />
				</OverflowButton>
			);
		case 'search':
			return (
				<SearchBox>
					<SearchInput aria-label="查找命令" defaultValue="查找命令" />
					<svg width="17" height="16" viewBox="0 0 17 16" aria-hidden="true">
						<circle cx="10.500" cy="6" r="4.800" fill="none" stroke="#333" strokeWidth="1.200" />
						<circle cx="10.500" cy="6" r="2.400" fill="none" stroke="#555" strokeWidth=".8" />
						<path d="M7 9.500L2 14.500" stroke="#333" strokeWidth="3" />
						<path d="M7 9.500L2.500 14" stroke="#fff" strokeWidth="1.200" />
					</svg>
				</SearchBox>
			);
		case 'finish':
			return (
				<FinishButton disabled>
					<svg width="24" height="24" viewBox="0 0 24 24" aria-hidden="true">{ICONS.finishFlag}</svg>
					<span>完成草图</span>
				</FinishButton>
			);
		case 'holeSearch':
			return (
				<StackedButton>
					<svg width="24" height="12" viewBox="0 0 24 12" aria-hidden="true">{ICONS.holeSearch}</svg>
					<span>10<em>H7</em></span>
				</StackedButton>
			);
		default:
			return small ? (
				<SmallButton $pressed={PRESSED.includes(name)} aria-label={toLabel(name)}>
					<svg width="18" height="18" viewBox="0 0 18 18" aria-hidden="true">{SMALL[name]}</svg>
				</SmallButton>
			) : (
				<ToolButton aria-label={toLabel(name)}>
					<svg width="24" height="24" viewBox="0 0 24 24" aria-hidden="true">{ICONS[name]}</svg>
				</ToolButton>
			);
	}
}

function Toolbar({ row }) {
	return (
		<ToolbarRow $start={row.start}>
			{row.groups.map((group, i) => (
				<ToolGroup key={i} $gap={group.gap} role="toolbar">
					{group.grip && <Grip />}
					{group.items.map((name, j) => <ToolItem key={`${name}_${j}`} name={name} spacer={group.spacer} />)}
				</ToolGroup>
			))}
		</ToolbarRow>
	);
}

/* ---------- left property panel ---------- */

const BLANK_ROWS = Array.from({ length: 18 }, (_, i) => i);
const VALUE_ROWS = ['000', '000', '000', '000', '000', '0,N'];

function SidePanel() {
	return (
		<Panel>
			<PanelTitle>
				<svg width="4" height="11" viewBox="0 0 4 11" aria-hidden="true"><path d="M0 1H3V10H0" fill="none" stroke="#222" strokeWidth="2" /></svg>
			</PanelTitle>
			<PropertyTable>
				<thead>
					<tr><HeadCell /></tr>
				</thead>
				<tbody>
					<tr><Cell /></tr>
					<tr><Cell $strong><CellText $end>序:</CellText></Cell></tr>
					{BLANK_ROWS.map(i => <tr key={i}><Cell $shaded={i % 2 === 1} /></tr>)}
					{VALUE_ROWS.map((value, i) => (
						<tr key={i}><Cell><CellText>{value}</CellText></Cell></tr>
					))}
				</tbody>
			</PropertyTable>
			<ScrollButton aria-label="scroll right">
				<svg width="6" height="8" viewBox="0 0 6 8" aria-hidden="true"><path d="M0 1L3.500 4L0 7" fill="none" stroke="#333" strokeWidth="2" /></svg>
			</ScrollButton>
			{[0, 1].map(i => (
				<CheckRow key={i}>
					<svg width="6" height="9" viewBox="0 0 6 9" aria-hidden="true"><path d="M0 7L1 8L5 1" fill="none" stroke="#2f80b8" strokeWidth="1.600" /></svg>
				</CheckRow>
			))}
		</Panel>
	);
}

/* ---------- 3D model ---------- */

function ModelDefs() {
	return (
		<defs>
			<linearGradient id="tube" gradientUnits="userSpaceOnUse" x1="410" y1="258" x2="455" y2="415">
				<stop offset="0" stopColor="#f29a00" />
				<stop offset=".2" stopColor="#ffc000" />
				<stop offset=".42" stopColor="#ffdc10" />
				<stop offset=".65" stopColor="#ffb600" />
				<stop offset=".85" stopColor="#ec8c00" />
				<stop offset="1" stopColor="#b86a00" />
			</linearGradient>
			<linearGradient id="tubeThin" gradientUnits="userSpaceOnUse" x1="750" y1="140" x2="795" y2="282">
				<stop offset="0" stopColor="#f6a400" />
				<stop offset=".35" stopColor="#ffd408" />
				<stop offset=".6" stopColor="#ffb800" />
				<stop offset=".85" stopColor="#f08e00" />
				<stop offset="1" stopColor="#b86a00" />
			</linearGradient>
			<linearGradient id="cap" gradientUnits="userSpaceOnUse" x1="910" y1="65" x2="965" y2="235">
				<stop offset="0" stopColor="#f8ac00" />
				<stop offset=".35" stopColor="#ffd408" />
				<stop offset=".7" stopColor="#ffa800" />
				<stop offset="1" stopColor="#c87400" />
			</linearGradient>
			<linearGradient id="backKnob" gradientUnits="userSpaceOnUse" x1="760" y1="150" x2="795" y2="255">
				<stop offset="0" stopColor="#f8ac00" />
				<stop offset=".4" stopColor="#ffd408" />
				<stop offset=".75" stopColor="#f49600" />
				<stop offset="1" stopColor="#b86c00" />
			</linearGradient>
			<linearGradient id="frontKnob" gradientUnits="userSpaceOnUse" x1="705" y1="280" x2="665" y2="385">
				<stop offset="0" stopColor="#ffc400" />
				<stop offset=".35" stopColor="#ffb000" />
				<stop offset=".7" stopColor="#e88c00" />
				<stop offset="1" stopColor="#b46800" />
			</linearGradient>
			<linearGradient id="drum" x1="0" x2="1" y1="0" y2="0">
				<stop offset="0" stopColor="#b06a00" />
				<stop offset=".3" stopColor="#d88400" />
				<stop offset=".55" stopColor="#c87a00" />
				<stop offset="1" stopColor="#a06000" />
			</linearGradient>
			<linearGradient id="bore" x1="0" x2="1" y1="0" y2="0">
				<stop offset="0" stopColor="#e07800" />
				<stop offset=".7" stopColor="#f89000" />
				<stop offset="1" stopColor="#ffc400" />
			</linearGradient>
			<linearGradient id="flute" x1="0" x2="0" y1="0" y2="1">
				<stop offset="0" stopColor="#ffd020" />
				<stop offset=".6" stopColor="#f4a000" />
				<stop offset="1" stopColor="#a86400" />
			</linearGradient>
		</defs>
	);
}

// two drawing frames at a third of a pixel per unit: lower assembly and upper assembly
const LOWER = 'translate(415 440) scale(.33333)';
const UPPER = 'translate(450 280) scale(.33333)';
const edge = { stroke: '#3c3010', strokeWidth: 2.6, strokeLinejoin: 'round' };

function Base() {
	return (
		<g transform={LOWER} {...edge}>
			<path fill="#ffc800" d="M35 560L107 498L350 460L385 448L428 465L348 545C325 562 295 570 262 571L90 590Z" />
			<path fill="#b06a00" d="M35 560L90 590V642L35 612Z" />
			<path fill="#c87a00" d="M90 590L262 571V622L90 642Z" />
			<path fill="#e89200" d="M262 571C300 570 325 562 348 545V595C325 614 295 622 262 622Z" />
			<path fill="#b87000" d="M348 545L428 465V516L348 595Z" />
			<ellipse cx="98" cy="562" rx="19" ry="10" fill="#a86400" />
			<ellipse cx="370" cy="465" rx="15" ry="8" fill="#a86400" />
			<path fill="#c87a00" d="M348 404L475 355L520 338L605 372L348 468Z" />
			<path fill="#ffc800" d="M290 385L440 320L475 352L350 405L330 418Z" />
			<path fill="#b46c00" d="M460 315L475 318L520 343L475 356L472 340Z" />
			<path fill="url(#drum)" d="M107 388V520C120 582 330 586 350 532V388Z" />
			<path fill="none" d="M107 462C115 524 340 524 350 462" />
			<ellipse cx="228" cy="389" rx="122" ry="56" fill="#ffc800" />
			<path fill="#ffc800" stroke="none" d="M300 372L440 335L468 352L352 402L330 420Z" />
			<path fill="none" d="M349 404L472 353" />
			<ellipse cx="226" cy="389" rx="66" ry="33" fill="#f4aa00" />
			<ellipse cx="232" cy="396" rx="59" ry="27" fill="url(#bore)" />
			<ellipse cx="170" cy="355" rx="9" ry="5" fill="#c87a00" />
			<ellipse cx="290" cy="423" rx="10" ry="5" fill="#c87a00" />
			<path fill="#9c6000" d="M236 320L248 348L330 390L460 340L462 328L330 378Z" />
			<path fill="#ffc400" d="M240 318L362 273L462 326L332 380Z" />
			<path fill="#c47600" d="M287 324L388 286L440 315L344 350L312 337Z" />
			<path fill="none" strokeWidth="2" d="M276 332L300 344L340 356L448 318M284 342L302 336M292 348L312 340" />
			<path fill="none" stroke="#7c5200" strokeWidth="2" d="M342 347L432 315M346 342L426 313" strokeDasharray="3 2" />
		</g>
	);
}

function BackKnob() {
	return (
		<g transform={LOWER} {...edge}>
			<path fill="#c87a00" d="M630 240L757 258V300L660 335Z" />
			<path fill="url(#backKnob)" d="M705 170L805 133C840 140 860 190 853 230L762 267C750 230 735 190 705 170Z" />
			<path fill="#f4a800" d="M680 180L705 170C745 180 765 225 763 267L738 262C738 222 715 190 680 180Z" />
			<path fill="#ffc400" d="M632 178L655 170L675 182L650 192Z" />
			<path fill="#b06a00" d="M632 178L650 190V215L632 205Z" />
			<path fill="#d88600" d="M650 190L675 182V218L655 218Z" />
			<path fill="#b46c00" d="M675 184C700 180 718 195 722 212L690 220L675 215Z" />
		</g>
	);
}

const RING_HOLES = [[600, 204], [614, 219], [627, 240], [636, 263], [642, 286], [644, 309], [643, 328], [631, 350]];

function Tube() {
	return (
		<g transform={UPPER} {...edge}>
			<path fill="#e89800" d="M515 415L735 338C745 340 750 350 743 362L518 444Z" />
			<path fill="#ffc810" stroke="none" d="M520 417L732 343L735 350L520 428Z" />
			<ellipse cx="738" cy="351" rx="7" ry="13" fill="#d08200" />
			<path fill="#b87000" d="M275 475L345 460V535L323 546L275 520Z" />
			<path fill="#d08200" d="M323 465L345 460V535L323 546Z" />
			<path fill="url(#tubeThin)" stroke="none" d="M640 181L870 93C930 110 950 190 935 235L685 318Z" />
			<path fill="none" stroke="#a87000" d="M685 318L912 242M640 181L868 95" strokeWidth="1.500" />
			<path fill="#e09000" d="M850 100C858 75 885 78 905 92C940 120 955 190 950 235C940 248 915 246 902 241C960 225 920 85 868 92Z" />
			<path fill="url(#cap)" d="M870 80L945 55C990 60 1020 120 1019 175C1018 195 1012 210 1003 216L948 238C962 180 930 90 870 80Z" />
			<path fill="url(#tube)" d="M207 321L515 228L590 195C635 230 640 330 600 370L268 487Z" stroke="none" />
			<path fill="none" strokeWidth="1.500" stroke="#a87000" d="M212 321L500 232M280 484L600 370" />
			<path fill="url(#tube)" d="M580 200L612 176C665 190 690 270 678 328C675 345 640 358 612 367C590 372 585 368 580 368C650 345 630 235 580 200Z" />
			<path fill="none" strokeWidth="5" d="M580 204C616 230 628 300 616 360" />
			{RING_HOLES.map(([x, y]) => <ellipse key={y} cx={x} cy={y} rx="5" ry="6" fill="#f0a810" strokeWidth="2.500" />)}
			<path fill="#ffbe00" d="M497 194L574 166L614 180L525 208Z" />
			<path fill="#b87000" d="M497 194L525 206V236L497 222Z" />
			<path fill="#d88400" d="M525 207L614 180V190L582 200V218L525 236Z" />
			<path fill="#e09000" d="M575 158H592V174H575Z" stroke="none" />
			<path fill="#5c4208" d="M553 132V148C560 162 605 164 613 148V132Z" />
			<ellipse cx="583" cy="133" rx="30" ry="12" fill="#e09600" />
			<path stroke="#b87a00" strokeWidth="1.500" d="M560 146V155M567 148V158M575 149V159M583 150V160M591 149V159M599 148V158M606 146V155" />
			<path fill="#f0a000" d="M205 322C250 318 288 400 285 446C284 472 275 487 248 488Z" />
			<path fill="#c87a00" d="M168 372C168 335 185 320 208 323C245 333 270 395 273 440C275 473 265 488 246 487C210 480 168 420 168 372Z" />
			<path fill="none" strokeWidth="5" d="M215 323C258 332 286 402 283 446C282 466 275 484 262 487" />
			<ellipse cx="217" cy="408" rx="20" ry="32" fill="#e09000" transform="rotate(-12 217 408)" />
			<path fill="#ffb400" d="M178 400L218 390C228 396 232 415 225 427L196 440Z" />
		</g>
	);
}

function Cutter() {
	return (
		<g transform={UPPER} {...edge} strokeWidth="3">
			<path fill="#d88800" d="M133 402C145 388 160 384 172 388L178 408L200 430L198 436L176 448L179 468L165 462L148 464L128 474L120 490L103 484L92 480L75 484L65 506L56 488L42 478L50 462L34 462L52 446L55 428C70 412 110 402 133 402Z" />
			<path fill="url(#flute)" d="M55 428C70 412 105 402 133 402C155 408 175 418 200 430C175 440 160 432 140 424C105 412 85 430 55 428Z" />
			<path fill="url(#flute)" d="M52 430C85 432 105 414 130 424C150 432 165 440 196 436C170 456 140 450 115 442C90 436 75 440 58 444Z" />
			<path fill="url(#flute)" d="M70 444C95 440 120 454 150 452L176 448L148 464L128 470C105 470 95 460 75 464Z" />
			<path fill="#ffbc10" d="M133 402C145 388 160 384 172 388L176 404C162 400 148 400 133 402Z" />
			<path fill="#ffb400" d="M88 478L128 470L120 490L103 486Z" />
			<path fill="#c87a00" d="M48 456C52 448 66 446 72 452C78 464 76 476 70 482C60 486 46 472 48 456Z" />
			<path fill="#ffb400" d="M52 484L72 482L66 506Z" />
			<path fill="#7c5204" d="M34 462L50 448L48 462Z" />
			<path fill="none" strokeWidth="4" d="M58 443C90 434 120 452 196 436M56 429C90 430 110 410 140 424" />
		</g>
	);
}

function CrossBeam() {
	return (
		<g transform={LOWER} {...edge}>
			<path fill="#ffc800" d="M250 142L262 130L350 160V200Z" />
			<path fill="#8c5600" d="M262 118L345 162V176L268 134Z" />
			<path fill="#ffc400" d="M262 115L388 68L450 98V120L350 150L345 162Z" />
			<path fill="#b46c00" d="M306 114L385 84L440 108L352 136Z" />
			<path fill="#e09000" d="M306 114L335 102L375 122L352 136Z" />
			<path fill="#ffc800" d="M348 148L440 104L450 112V204Z" />
			<path fill="#b06a00" d="M348 245L375 258V278L348 272Z" />
			<path fill="#b06a00" d="M250 142L348 192V148L448 202L475 262L572 322V373L472 320L350 250L250 195Z" />
			<path fill="none" d="M348 192V203L475 268" />
		</g>
	);
}

function Pillar() {
	return (
		<g transform={UPPER} {...edge}>
			<path fill="url(#tube)" stroke="none" d="M352 284C400 288 450 306 478 328L400 360L350 470C338 400 340 340 352 284Z" />
			<path fill="none" d="M346 440C338 390 342 330 352 284C400 288 450 306 478 328" />
			<path fill="#b87000" d="M346 415L378 428L368 746L342 680L340 610Z" />
			<path fill="#ffb400" d="M356 416C368 352 408 316 452 319C465 320 475 324 482 330L450 326C405 336 382 375 378 428Z" />
			<path fill="#c87800" d="M368 746L378 420C382 368 408 326 448 323C492 325 511 360 512 395L522 560L527 690L440 740Z" />
			<path fill="none" d="M340 608L370 618" />
			<ellipse cx="443" cy="409" rx="10" ry="13" fill="#ffb810" />
			<path fill="#a86400" d="M437 400C430 410 436 422 444 422C438 416 437 408 442 398Z" stroke="none" />
		</g>
	);
}

function CrossSlide() {
	return (
		<g transform={LOWER} {...edge}>
			<path fill="#ffc800" d="M474 266L490 258L600 308L610 312L572 323Z" />
			<path fill="#d08000" d="M572 323L600 300L632 340L612 366L572 373Z" />
			<path fill="#7c4e00" d="M487 242L590 292L600 308L580 306L495 256Z" />
			<path fill="#ffc400" d="M487 240L632 195L744 230L738 248L705 262L618 292L590 292Z" />
			<path fill="#c47600" d="M510 231L600 205L672 243L600 272Z" />
			<path fill="none" stroke="#8c5a00" strokeDasharray="3 2" strokeWidth="4" d="M542 232L606 266" />
			<path fill="none" d="M604 201L710 250M590 290L650 268M516 230L600 273L680 248" strokeWidth="2" />
			<path fill="#6c4800" d="M684 222L692 206L700 216L710 214L706 224Z" />
			<path fill="#7c4e00" d="M705 250L742 232V240L712 256Z" />
			<path fill="#d08000" d="M706 262L757 250V300L725 290Z" />
			<path fill="#ffc400" d="M706 262L725 250L752 255L735 268Z" />
			<path fill="#d08400" d="M607 320C607 285 635 262 655 262L690 272L650 362C620 364 607 345 607 320Z" />
			<path fill="url(#frontKnob)" d="M650 268C665 262 680 264 695 268L770 308C740 310 705 360 712 400L728 413L637 366C630 320 635 280 650 268Z" />
			<ellipse cx="750" cy="361" rx="42" ry="56" fill="#c87a00" transform="rotate(20 750 361)" />
			<ellipse cx="751" cy="361" rx="27" ry="37" fill="url(#bore)" transform="rotate(20 751 361)" />
			<path fill="none" stroke="#ffd84c" strokeWidth="5" d="M768 335C784 355 768 385 748 393" />
		</g>
	);
}

function ClampRod() {
	return (
		<g transform={UPPER} {...edge}>
			<path fill="#f0a000" d="M238 513L292 497C305 500 308 512 303 522L245 540Z" />
			<path fill="#ffc820" stroke="none" d="M240 518L292 502L294 508L243 526Z" />
			<path fill="#f0a000" d="M145 468L175 458L295 618C298 632 285 642 268 638Z" />
			<path fill="#ffc820" stroke="none" d="M152 470L162 466L278 624L270 630Z" />
			<ellipse cx="282" cy="628" rx="16" ry="8" fill="#b06a00" transform="rotate(-25 282 628)" />
			<path fill="#e09400" d="M187 538L203 512L235 508L247 528L240 552L208 569L190 560Z" />
			<path fill="#ffbc10" d="M187 538L203 512L218 518L205 545Z" />
			<path fill="none" d="M218 518L238 512M205 545L208 569M228 515L222 545L205 547M222 545L226 560" />
		</g>
	);
}

function WorkAxes() {
	return (
		<g>
			<path d="M492 627L490 586L492 579L494.500 586Z" fill="#5c78dc" stroke="#3854b8" strokeWidth=".6" />
			<path d="M488 626L470 617L458 609L474 612Z" fill="#90e0a8" stroke="#4c9c68" strokeWidth=".6" />
			<path d="M496 626L518 615L534 613L522 619Z" fill="#ffa898" stroke="#d86850" strokeWidth=".6" />
			<AxisText x="497" y="577" fill="#2c4cb0">ZC</AxisText>
			<AxisText x="459" y="605" fill="#5c9c18">YC</AxisText>
			<AxisText x="521" y="608" fill="#e02c18">XC</AxisText>
		</g>
	);
}

function Triad() {
	return (
		<TriadSvg width="80" height="56" viewBox="42 692 80 56">
			<g fill="none" stroke="#aaa">
				<path d="M62 712L76 705L93 713L78 721ZM62 712V732L75 738L93 729V713M78 721V738M62 732L76 722L93 729" />
			</g>
			<path d="M75 736V716" stroke="#1038c8" strokeWidth="3" />
			<path d="M75 705L78.500 716H71.500Z" fill="#1038c8" />
			<path d="M72 737L58 730" stroke="#308838" strokeWidth="2" />
			<path d="M52 726L62 727L59 733Z" fill="#308838" />
			<path d="M80 737L96 731" stroke="#c83838" strokeWidth="2" />
			<path d="M104 728L94 729L97 735Z" fill="#d82c2c" />
			<circle cx="75.500" cy="738.500" r="4" fill="#b8b8b8" stroke="#888" strokeWidth=".6" />
			<circle cx="74.500" cy="737" r="1.500" fill="#f0f0f0" />
			<AxisText x="71" y="706" fill="#2850d8">Z</AxisText>
			<AxisText x="45" y="729" fill="#309838">Y</AxisText>
			<AxisText x="105" y="732" fill="#e03838">X</AxisText>
		</TriadSvg>
	);
}

function App() {
	return (
		<Window>
			<GlobalStyle />
			<TitleStrip />
			{ROWS.map(row => <Toolbar key={row.start} row={row} />)}
			<SelectionBar>
				<ScopeWrapper>
					<ScopeSelect aria-label="selection scope" defaultValue="scope">
						<option value="scope">配</option>
					</ScopeSelect>
					<ScopeCaret><Caret /></ScopeCaret>
				</ScopeWrapper>
				{SELECTION.map((name, i) => <ToolItem key={`${name}_${i}`} name={name} small />)}
				<SnapGroup>
					{SNAPS.map(name => <ToolItem key={name} name={name} small />)}
				</SnapGroup>
			</SelectionBar>
			<Workspace>
				<SidePanel />
				<Viewport>
					<ModelSvg>
						<ModelDefs />
						<g transform="translate(-21 -138)">
							<Base />
							<Tube />
							<BackKnob />
							<CrossBeam />
							<Pillar />
							<CrossSlide />
							<ClampRod />
							<Cutter />
							<WorkAxes />
						</g>
					</ModelSvg>
					<Triad />
				</Viewport>
			</Workspace>
			<Toolbar row={BOTTOM} />
			<StatusBar>
				<svg width="28" height="5" viewBox="0 0 28 5" aria-hidden="true"><path d="M.500 5V2.500H15.500V5M3 5L6 4M20.500 5V1.500H25" fill="none" stroke="#b4b4b4" /></svg>
			</StatusBar>
		</Window>
	);
}

/* ---------- styles ---------- */

var plainButton = css`
	display: flex;
	align-items: center;
	justify-content: center;
	flex: none;
	padding: 0;
	border: 0;
	background: none;
`;

var Window = styled.div`
	display: flex;
	flex-direction: column;
	height: 100vh;
	overflow: hidden;
	background: #fff;
`;

var TitleStrip = styled.div`
	flex: none;
	height: 4px;
	background: #c8d8d6;
`;

var ToolbarRow = styled.div`
	display: flex;
	flex: none;
	height: 34px;
	margin-left: ${({ $start }) => $start}px;
`;

var ToolGroup = styled.div`
	display: flex;
	flex: none;
	align-items: center;
	padding-right: 2px;
	margin-left: ${({ $gap }) => $gap || 0}px;
	border-right: 1px solid #dde2e1;
	border-bottom: 1px solid #dde2e1;
`;

var Grip = styled.span`
	flex: none;
	width: 2px;
	height: 27px;
	margin: 0 2px 0 3px;
	background: repeating-linear-gradient(#a8a8a8 0 2px, transparent 2px 5px);
`;

var ToolButton = styled.button`
	${plainButton}
	width: 31px;
	height: 28px;
`;

var StackedButton = styled.button`
	${plainButton}
	flex-direction: column;
	width: 31px;
	height: 28px;
	line-height: 12px;

	em {
		font-style: normal;
		color: #b82828;
	}
`;

var SmallButton = styled.button`
	${plainButton}
	width: 23px;
	height: 22px;
	${({ $pressed }) => $pressed && `
		background: #c8d8d6;
		border: 1px solid #b0c4c0;
	`}
`;

var DropButton = styled.button`
	${plainButton}
	width: ${({ $small }) => ($small ? 10 : 12)}px;
	height: 22px;
`;

var OverflowButton = styled.button`
	${plainButton}
	flex-direction: column;
	justify-content: ${({ $double }) => ($double ? 'space-between' : 'flex-end')};
	align-self: stretch;
	width: 12px;
	padding: 4px 0 7px;
`;

var Separator = styled.span`
	flex: none;
	width: 1px;
	height: 26px;
	margin: 0 3px 0 2px;
	background: #d8d8d8;
`;

var Spacer = styled.span`
	width: ${({ $width }) => $width}px;
`;

var SearchBox = styled.label`
	display: flex;
	align-items: center;
	width: 125px;
	height: 20px;
	margin: 0 4px;
	border: 1px solid #999;
	background: #fff;
`;

var SearchInput = styled.input`
	flex: 1;
	min-width: 0;
	padding: 0 1px;
	border: 0;
	outline: 0;
	background: none;
`;

var FinishButton = styled.button`
	${plainButton}
	gap: 4px;
	padding: 0 3px;
	color: #b0b0b0;
`;

var SelectionBar = styled.div`
	display: flex;
	flex: none;
	align-items: center;
	height: 31px;
	margin-left: -8px;
`;

var ScopeWrapper = styled.div`
	position: relative;
	width: 106px;
	height: 20px;
	margin-right: 3px;
`;

var ScopeSelect = styled.select`
	appearance: none;
	width: 100%;
	height: 100%;
	padding: 0 16px 0 1px;
	border: 1px solid #a0a8a8;
	border-radius: 0;
	background: #fff;
`;

var ScopeCaret = styled.span`
	position: absolute;
	top: 0;
	right: 5px;
	display: flex;
	align-items: center;
	height: 100%;
	pointer-events: none;
`;

var SnapGroup = styled.div`
	display: flex;
	align-items: center;
	margin-left: 2px;
`;

var Workspace = styled.div`
	display: flex;
	flex: 1;
	min-height: 0;
`;

var Panel = styled.aside`
	flex: none;
	width: 20px;
	overflow: hidden;
	border-top: 1px solid #808c88;
`;

var PanelTitle = styled.div`
	display: flex;
	align-items: center;
	height: 29px;
	padding-top: 1px;
`;

var PropertyTable = styled.table`
	width: 11px;
	table-layout: fixed;
	border-collapse: separate;
	border-spacing: 0;
	border-top: 1px solid #ccc;
	border-right: 1px solid #ccc;
`;

var HeadCell = styled.th`
	height: 21px;
	padding: 0;
	background: #efefef;
	border-bottom: 1px solid #ccc;
`;

var Cell = styled.td`
	height: 20px;
	padding: 0;
	line-height: 19px;
	border-bottom: 1px solid #e4e4e4;
	background: ${({ $shaded }) => ($shaded ? '#fafafa' : '#fff')};
	color: ${({ $strong }) => ($strong ? '#20304c' : '#999')};
	font-weight: ${({ $strong }) => ($strong ? 700 : 400)};
`;

var CellText = styled.span`
	display: flex;
	justify-content: ${({ $end }) => ($end ? 'flex-end' : 'center')};
	overflow: hidden;
	font-size: 12px;
	white-space: nowrap;
`;

var ScrollButton = styled.button`
	${plainButton}
	justify-content: flex-start;
	width: 11px;
	height: 21px;
	margin-top: 10px;
	background: #f0f0f0;
	border-bottom: 3px solid #c8c8c8;
`;

var CheckRow = styled.div`
	display: flex;
	align-items: center;
	width: 11px;
	height: 24px;
	border-bottom: 1px solid #aaa;
`;

var Viewport = styled.main`
	position: relative;
	flex: 1;
	min-width: 0;
	background: #d4d4d4;
	border-top: 1px solid #808c88;
	border-left: 1px solid #808c88;
`;

var ModelSvg = styled.svg`
	display: block;
	width: 100%;
	height: 100%;
`;

var TriadSvg = styled.svg`
	position: absolute;
	left: 21px;
	bottom: 48px;
`;

var AxisText = styled.text`
	font-family: "Liberation Sans", sans-serif;
	font-size: 12px;
`;

var StatusBar = styled.footer`
	display: flex;
	flex: none;
	justify-content: flex-end;
	height: 6px;
	border-top: 1px solid #b0b0b0;
`;

export default App;
